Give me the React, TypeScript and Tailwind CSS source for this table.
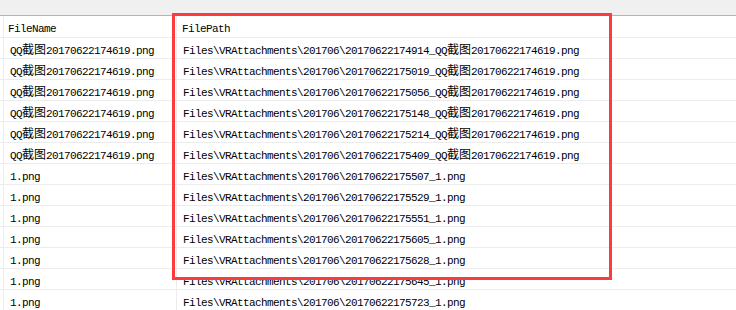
// Grid view of uploaded attachments, FilePath column boxed in red
const rows: { name: string; stamp: string }[] = [
  { name: 'QQ截图20170622174619.png', stamp: '20170622174914' },
  { name: 'QQ截图20170622174619.png', stamp: '20170622175019' },
  { name: 'QQ截图20170622174619.png', stamp: '20170622175056' },
  { name: 'QQ截图20170622174619.png', stamp: '20170622175148' },
  { name: 'QQ截图20170622174619.png', stamp: '20170622175214' },
  { name: 'QQ截图20170622174619.png', stamp: '20170622175409' },
  { name: '1.png', stamp: '20170622175507' },
  { name: '1.png', stamp: '20170622175529' },
  { name: '1.png', stamp: '20170622175551' },
  { name: '1.png', stamp: '20170622175605' },
  { name: '1.png', stamp: '20170622175628' },
  { name: '1.png', stamp: '20170622175645' },
  { name: '1.png', stamp: '20170622175723' },
];

// split text so latin runs use the mono face and CJK runs the CJK face
function Txt({ text }: { text: string }) {
  const parts = text.match(/[\u4e00-\u9fff]+|[^\u4e00-\u9fff]+/g) || [];
  return (
    <span className="whitespace-pre">
      {parts.map((p, i) =>
        /[\u4e00-\u9fff]/.test(p) ? (
          <span key={i} className="font-['Noto_Sans_CJK_SC',sans-serif] text-[12px] tracking-normal">
            {p}
          </span>
        ) : (
          <span key={i} className="font-['Liberation_Mono',monospace] text-[11px] tracking-[-0.6px]">
            {p}
          </span>
        )
      )}
    </span>
  );
}

export default function App() {
  return (
    <div className="relative w-[736px] h-[310px] overflow-hidden bg-white text-black">
      {/* Top strip */}
      <div className="h-[16px] bg-[#f0f0f0] border-b border-[#b4b4b4]" />

      {/* Header */}
      <div className="flex h-[22px] items-center border-b border-[#ececec]">
        <div className="w-[4px] self-stretch border-r border-[#ececec]" />
        <div className="w-[173px] self-stretch flex items-center pl-[4px] border-r border-[#ececec] leading-none">
          <Txt text="FileName" />
        </div>
        <div className="flex-1 self-stretch flex items-center pl-[5px] leading-none">
          <Txt text="FilePath" />
        </div>
      </div>

      {/* Rows */}
      {rows.map((r, i) => (
        <div key={i} className="flex h-[21px] border-b border-[#ececec]">
          <div className="w-[4px] border-r border-[#ececec]" />
          <div className="w-[173px] flex items-center pl-[6px] border-r border-[#ececec] leading-none">
            <Txt text={r.name} />
          </div>
          <div className="flex-1 flex items-center pl-[6px] leading-none">
            <Txt text={`Files\\VRAttachments\\201706\\${r.stamp}_${r.name}`} />
          </div>
        </div>
      ))}

      {/* Red highlight box */}
      <div className="absolute left-[172px] top-[13px] w-[440px] h-[267px] border-[3px] border-[#fa3c3c]" />
    </div>
  );
}
